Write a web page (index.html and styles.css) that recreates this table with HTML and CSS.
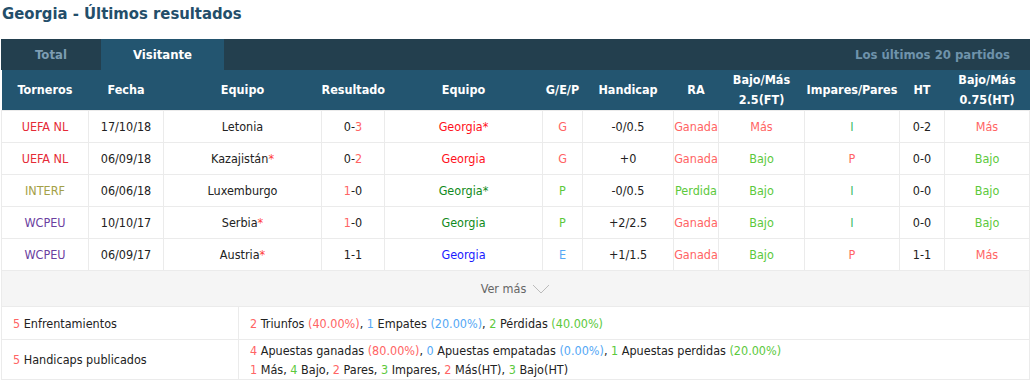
FILE: index.html
```html
<!DOCTYPE html>
<html>
<head>
  <title>Georgia - Últimos resultados</title>
  <link rel="stylesheet" href="styles.css">
</head>
<body>
  <h2 class="title">Georgia - Últimos resultados</h2>

  <div class="board">
    <div class="tabs">
      <div class="tab">Total</div>
      <div class="tab active">Visitante</div>
      <div class="tab-info">Los últimos 20 partidos</div>
    </div>

    <table class="results">
      <colgroup>
        <col style="width:87px">
        <col style="width:75px">
        <col style="width:158px">
        <col style="width:63px">
        <col style="width:158px">
        <col style="width:40px">
        <col style="width:91px">
        <col style="width:45px">
        <col style="width:86px">
        <col style="width:95px">
        <col style="width:45px">
        <col style="width:85px">
      </colgroup>
      <thead>
        <tr>
          <th>Torneros</th>
          <th>Fecha</th>
          <th>Equipo</th>
          <th>Resultado</th>
          <th>Equipo</th>
          <th>G/E/P</th>
          <th>Handicap</th>
          <th>RA</th>
          <th>Bajo/Más<br>2.5(FT)</th>
          <th>Impares/Pares</th>
          <th>HT</th>
          <th>Bajo/Más<br>0.75(HT)</th>
        </tr>
      </thead>
      <tbody>
        <tr>
          <td class="lg-uefa">UEFA NL</td>
          <td>17/10/18</td>
          <td>Letonia</td>
          <td>0-<span class="red">3</span></td>
          <td class="team-red">Georgia*</td>
          <td class="red">G</td>
          <td>-0/0.5</td>
          <td class="red">Ganada</td>
          <td class="red">Más</td>
          <td class="odd">I</td>
          <td>0-2</td>
          <td class="red">Más</td>
        </tr>
        <tr>
          <td class="lg-uefa">UEFA NL</td>
          <td>06/09/18</td>
          <td>Kazajistán<span class="star">*</span></td>
          <td>0-<span class="red">2</span></td>
          <td class="team-red">Georgia</td>
          <td class="red">G</td>
          <td>+0</td>
          <td class="red">Ganada</td>
          <td class="green">Bajo</td>
          <td class="red">P</td>
          <td>0-0</td>
          <td class="green">Bajo</td>
        </tr>
        <tr>
          <td class="lg-interf">INTERF</td>
          <td>06/06/18</td>
          <td>Luxemburgo</td>
          <td><span class="red">1</span>-0</td>
          <td class="team-green">Georgia*</td>
          <td class="green">P</td>
          <td>-0/0.5</td>
          <td class="green">Perdida</td>
          <td class="green">Bajo</td>
          <td class="odd">I</td>
          <td>0-0</td>
          <td class="green">Bajo</td>
        </tr>
        <tr>
          <td class="lg-wc">WCPEU</td>
          <td>10/10/17</td>
          <td>Serbia<span class="star">*</span></td>
          <td><span class="red">1</span>-0</td>
          <td class="team-green">Georgia</td>
          <td class="green">P</td>
          <td>+2/2.5</td>
          <td class="red">Ganada</td>
          <td class="green">Bajo</td>
          <td class="odd">I</td>
          <td>0-0</td>
          <td class="green">Bajo</td>
        </tr>
        <tr>
          <td class="lg-wc">WCPEU</td>
          <td>06/09/17</td>
          <td>Austria<span class="star">*</span></td>
          <td>1-1</td>
          <td class="team-blue">Georgia</td>
          <td class="blue">E</td>
          <td>+1/1.5</td>
          <td class="red">Ganada</td>
          <td class="green">Bajo</td>
          <td class="red">P</td>
          <td>1-1</td>
          <td class="red">Más</td>
        </tr>
      </tbody>
    </table>

    <div class="more">
      Ver más
      <svg class="chevron" width="18" height="10" viewBox="0 0 18 10">
        <polyline points="1,1 9,9 17,1" fill="none" stroke="#bbb" stroke-width="1"/>
      </svg>
    </div>

    <table class="summary">
      <tr>
        <td class="label"><span class="red">5</span> Enfrentamientos</td>
        <td>
          <span class="red">2</span> Triunfos <span class="red">(40.00%)</span>,
          <span class="blue">1</span> Empates <span class="blue">(20.00%)</span>,
          <span class="green">2</span> Pérdidas <span class="green">(40.00%)</span>
        </td>
      </tr>
      <tr class="tall">
        <td class="label"><span class="red">5</span> Handicaps publicados</td>
        <td>
          <div class="line">
            <span class="red">4</span> Apuestas ganadas <span class="red">(80.00%)</span>,
            <span class="blue">0</span> Apuestas empatadas <span class="blue">(0.00%)</span>,
            <span class="green">1</span> Apuestas perdidas <span class="green">(20.00%)</span>
          </div>
          <div class="line">
            <span class="red">1</span> Más, <span class="green">4</span> Bajo,
            <span class="red">2</span> Pares, <span class="green">3</span> Impares,
            <span class="red">2</span> Más(HT), <span class="green">3</span> Bajo(HT)
          </div>
        </td>
      </tr>
    </table>
  </div>
</body>
</html>
```

FILE: styles.css
```css
body {
  margin: 0;
  padding: 0;
  background-color: white;
  font-family: "DejaVu Sans Condensed", "DejaVu Sans", sans-serif;
  font-stretch: semi-condensed;
  font-size: 12.5px;
  color: #222;
}

.title {
  margin: 0;
  padding: 4px 2px 0;
  height: 39px;
  box-sizing: border-box;
  font-size: 16.5px;
  font-weight: bold;
  color: #234e6a;
}

.board {
  margin-left: 1px;
  width: 1029px;
}

.tabs {
  display: flex;
  height: 31px;
  background-color: #233f4e;
  font-weight: bold;
  font-size: 13px;
}

.tab {
  width: 100px;
  line-height: 31px;
  text-align: center;
  color: #7d9db3;
}

.tab.active {
  width: 123px;
  background-color: #235570;
  color: white;
}

.tab-info {
  margin-left: auto;
  padding-right: 20px;
  line-height: 31px;
  color: #6f93ab;
}

.results {
  width: 100%;
  table-layout: fixed;
  border-collapse: collapse;
}

.results th {
  height: 40px;
  padding: 0;
  background-color: #235570;
  color: white;
  font-weight: bold;
  font-size: 12.5px;
  line-height: 20px;
}

.results td {
  height: 31px;
  padding: 0;
  text-align: center;
  border: 1px solid #ebebeb;
  white-space: nowrap;
}

.lg-uefa { color: #e52a37; }
.lg-interf { color: #a3a046; }
.lg-wc { color: #6a40a0; }

.red { color: #ff6464; }
.green { color: #5cc93c; }
.blue { color: #55a8f5; }
.odd { color: #38bb6a; }
.star { color: #ff3a3a; }

.team-red { color: #ff1020; }
.team-green { color: #108a20; }
.team-blue { color: #1a1aff; }

.more {
  display: flex;
  justify-content: center;
  align-items: center;
  gap: 6px;
  height: 35px;
  background-color: #f5f5f5;
  color: #666;
  border-left: 1px solid #ebebeb;
  border-right: 1px solid #ebebeb;
}

.summary {
  width: 100%;
  border-collapse: collapse;
}

.summary td {
  padding: 0 0 0 11px;
  height: 32px;
  border: 1px solid #ebebeb;
}

.summary .tall td {
  height: 39px;
}

.summary td.label {
  width: 225px;
}

.summary .line {
  line-height: 19px;
}
```
